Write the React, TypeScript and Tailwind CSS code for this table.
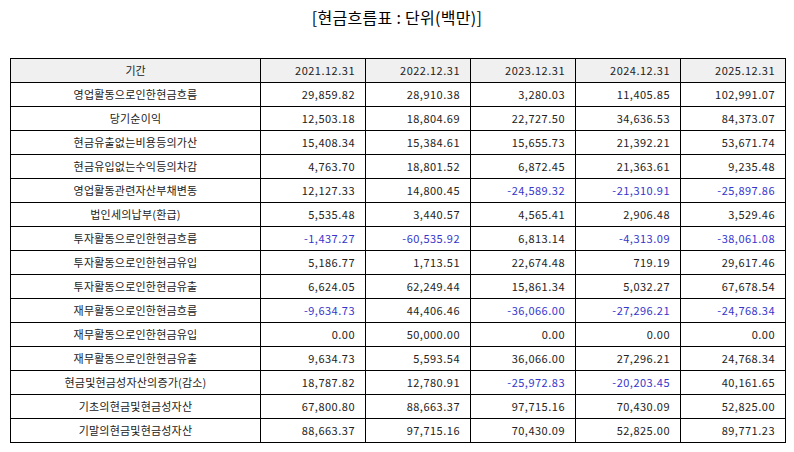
const headers = ["2021.12.31", "2022.12.31", "2023.12.31", "2024.12.31", "2025.12.31"];

const rows: [string, string[]][] = [
  ["영업활동으로인한현금흐름", ["29,859.82", "28,910.38", "3,280.03", "11,405.85", "102,991.07"]],
  ["당기순이익", ["12,503.18", "18,804.69", "22,727.50", "34,636.53", "84,373.07"]],
  ["현금유출없는비용등의가산", ["15,408.34", "15,384.61", "15,655.73", "21,392.21", "53,671.74"]],
  ["현금유입없는수익등의차감", ["4,763.70", "18,801.52", "6,872.45", "21,363.61", "9,235.48"]],
  ["영업활동관련자산부채변동", ["12,127.33", "14,800.45", "-24,589.32", "-21,310.91", "-25,897.86"]],
  ["법인세의납부(환급)", ["5,535.48", "3,440.57", "4,565.41", "2,906.48", "3,529.46"]],
  ["투자활동으로인한현금흐름", ["-1,437.27", "-60,535.92", "6,813.14", "-4,313.09", "-38,061.08"]],
  ["투자활동으로인한현금유입", ["5,186.77", "1,713.51", "22,674.48", "719.19", "29,617.46"]],
  ["투자활동으로인한현금유출", ["6,624.05", "62,249.44", "15,861.34", "5,032.27", "67,678.54"]],
  ["재무활동으로인한현금흐름", ["-9,634.73", "44,406.46", "-36,066.00", "-27,296.21", "-24,768.34"]],
  ["재무활동으로인한현금유입", ["0.00", "50,000.00", "0.00", "0.00", "0.00"]],
  ["재무활동으로인한현금유출", ["9,634.73", "5,593.54", "36,066.00", "27,296.21", "24,768.34"]],
  ["현금및현금성자산의증가(감소)", ["18,787.82", "12,780.91", "-25,972.83", "-20,203.45", "40,161.65"]],
  ["기초의현금및현금성자산", ["67,800.80", "88,663.37", "97,715.16", "70,430.09", "52,825.00"]],
  ["기말의현금및현금성자산", ["88,663.37", "97,715.16", "70,430.09", "52,825.00", "89,771.23"]],
];

export default function App() {
  return (
    <div className="w-[794px] h-[452px] bg-white text-[#222] font-['Noto_Sans_CJK_KR','Noto_Sans',sans-serif]">
      <div className="pt-[6px] h-[58px] text-center text-[16px] leading-[22px] tracking-[0.3px] text-black">
        [현금흐름표 : 단위(백만)]
      </div>
      <table className="ml-[10px] w-[775px] border-collapse table-fixed text-[11px]">
        <colgroup>
          <col className="w-[250px]" />
          <col className="w-[105px]" />
          <col className="w-[105px]" />
          <col className="w-[105px]" />
          <col className="w-[105px]" />
          <col className="w-[105px]" />
        </colgroup>
        <thead>
          <tr className="h-[24px] bg-[#f0f0f0]">
            <th className="border border-black font-normal text-center">기간</th>
            {headers.map((h) => (
              <th key={h} className="border border-black font-normal text-right pr-[10px] tracking-[0.5px]">
                {h}
              </th>
            ))}
          </tr>
        </thead>
        <tbody>
          {rows.map(([label, vals]) => (
            <tr key={label} className="h-[24px]">
              <td className="border border-black text-center tracking-[0.2px]">{label}</td>
              {vals.map((v, i) => (
                <td
                  key={i}
                  className={
                    v.startsWith("-")
                      ? "border border-black text-right pr-[10px] tracking-[0.5px] text-[#3535cc]"
                      : "border border-black text-right pr-[10px] tracking-[0.5px]"
                  }
                >
                  {v}
                </td>
              ))}
            </tr>
          ))}
        </tbody>
      </table>
    </div>
  );
}
